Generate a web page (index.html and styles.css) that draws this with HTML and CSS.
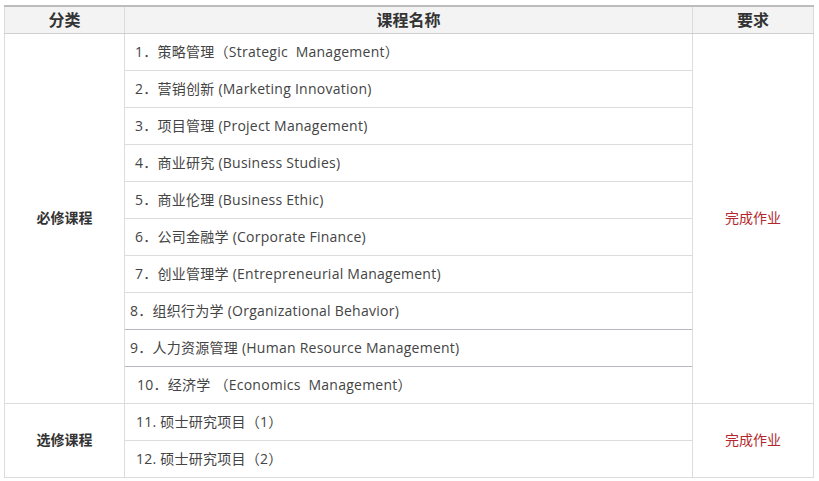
FILE: index.html
```html
<!DOCTYPE html>
<html lang="zh-CN">
<head>
<meta charset="utf-8">
<title>课程</title>
<link rel="stylesheet" href="styles.css">
</head>
<body>
<table class="course-table">
  <thead>
    <tr class="head-row">
      <th class="col-cat">分类</th>
      <th class="col-name">课程名称</th>
      <th class="col-req">要求</th>
    </tr>
  </thead>
  <tbody>
    <tr>
      <td class="cat" rowspan="10">必修课程</td>
      <td class="name">1．策略管理（Strategic&nbsp; Management）</td>
      <td class="req" rowspan="10">完成作业</td>
    </tr>
    <tr><td class="name">2．营销创新 (Marketing Innovation)</td></tr>
    <tr><td class="name">3．项目管理 (Project Management)</td></tr>
    <tr><td class="name">4．商业研究 (Business Studies)</td></tr>
    <tr><td class="name">5．商业伦理 (Business Ethic)</td></tr>
    <tr><td class="name">6．公司金融学 (Corporate Finance)</td></tr>
    <tr><td class="name">7．创业管理学 (Entrepreneurial Management)</td></tr>
    <tr><td class="name name-tight name-dark-bottom">8．组织行为学 (Organizational Behavior)</td></tr>
    <tr><td class="name name-tight name-dark-bottom">9．人力资源管理 (Human Resource Management)</td></tr>
    <tr><td class="name name-wide">10．经济学 （Economics&nbsp; Management）</td></tr>
    <tr>
      <td class="cat" rowspan="2">选修课程</td>
      <td class="name name-mid">11. 硕士研究项目（1）</td>
      <td class="req" rowspan="2">完成作业</td>
    </tr>
    <tr><td class="name name-mid">12. 硕士研究项目（2）</td></tr>
  </tbody>
</table>
</body>
</html>
```
FILE: styles.css
```css
html, body {
  margin: 0;
  padding: 0;
  background: #ffffff;
}
body {
  padding: 5px 5px 0 4px;
  font-family: "Open Sans", "Noto Sans CJK SC", sans-serif;
  color: #333333;
}
.course-table {
  width: 806px;
  border-collapse: collapse;
  table-layout: fixed;
  font-size: 14px;
}
.col-cat { width: 119px; }
.col-name { width: 567px; }
.col-req { width: 120px; }
.head-row th {
  height: 26px;
  padding: 0;
  background: #f3f3f3;
  border-top: 2px solid #bdbdbd;
  border-bottom: 1px solid #cfcfcf;
  border-left: 1px solid #dcdcdc;
  border-right: 1px solid #dcdcdc;
  font-size: 16px;
  font-weight: bold;
  color: #333333;
  text-align: center;
  vertical-align: middle;
  line-height: 20px;
}
tbody td {
  border: 1px solid #dcdcdc;
  padding: 0;
  vertical-align: middle;
}
tbody tr {
  height: 37px;
}
.cat {
  text-align: center;
  font-weight: bold;
  color: #333333;
  padding-bottom: 4px;
}
.req {
  text-align: center;
  color: #b3272c;
  padding-bottom: 4px;
}
.name {
  padding-left: 10px;
  padding-bottom: 2px;
  color: #444444;
  white-space: nowrap;
  letter-spacing: 0.25px;
}
.name-tight { padding-left: 5px; }
.name-wide { padding-left: 12px; }
.name-mid { padding-left: 11px; }
.name-dark-bottom {
  border-bottom: 1px solid #b5b8be;
}
```
